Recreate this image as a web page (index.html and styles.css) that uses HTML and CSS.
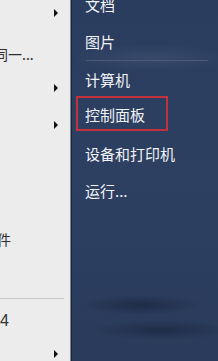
FILE: index.html
```html
<!DOCTYPE html>
<html>
<head>
<meta charset="utf-8">
<link rel="stylesheet" href="styles.css">
</head>
<body>
<div class="menu">
  <div class="left">
    <div class="lrow r1"><span class="arrow"></span></div>
    <div class="lrow r2"><span class="ltext cut6">同一...</span></div>
    <div class="lrow r3"><span class="arrow"></span></div>
    <div class="lrow r4"><span class="arrow"></span></div>
    <div class="lrow r5"><span class="ltext cut3">件</span></div>
    <div class="lsep"></div>
    <div class="lrow r6"><span class="ltext num">4</span></div>
    <div class="lrow r7"><span class="arrow"></span></div>
  </div>
  <div class="right">
    <div class="ritem first">文档</div>
    <div class="ritem">图片</div>
    <div class="rsep"></div>
    <div class="ritem">计算机</div>
    <div class="ritem boxrow"><span class="redbox">控制面板</span></div>
    <div class="ritem">设备和打印机</div>
    <div class="ritem">运行...</div>
  </div>
</div>
</body>
</html>
```

FILE: styles.css
```css
html, body {
  margin: 0;
  padding: 0;
  width: 218px;
  height: 361px;
  overflow: hidden;
  background: #ececec;
}
.menu {
  display: flex;
  width: 218px;
  height: 361px;
  overflow: hidden;
  font-family: "Noto Sans CJK SC", "Noto Sans", sans-serif;
}
.left {
  width: 70px;
  flex: none;
  background: #ececec;
  display: flex;
  flex-direction: column;
}
.lrow {
  height: 16px;
  display: flex;
  align-items: center;
  justify-content: space-between;
  position: relative;
}
.r1 { margin-top: 6px; }
.r2 { margin-top: 25px; }
.r3 { margin-top: 19px; }
.r4 { margin-top: 22px; }
.r5 { margin-top: 99px; }
.lsep {
  margin-top: 51px;
  height: 1px;
  width: 64px;
  background: #c9c9c9;
}
.r6 { margin-top: 14px; }
.r7 { margin-top: 17px; }
.arrow {
  margin-left: auto;
  margin-right: 12px;
  width: 0;
  height: 0;
  border-top: 4px solid transparent;
  border-bottom: 4px solid transparent;
  border-left: 4px solid #111;
}
.ltext {
  font-size: 14px;
  color: #2e2e2e;
  white-space: nowrap;
  line-height: 16px;
}
.cut6 { margin-left: -6px; }
.cut3 { margin-left: -3px; }
.num {
  font-family: "Liberation Sans", sans-serif;
  font-size: 16px;
  color: #333;
  margin-left: 0;
}
.right {
  flex: 1;
  border-left: 1px solid #7d8593;
  box-shadow: inset 1px 0 0 #1a2538;
  background:
    radial-gradient(ellipse 60px 10px at 70px 305px, rgba(20,30,52,0.55), transparent),
    radial-gradient(ellipse 70px 10px at 90px 330px, rgba(20,30,52,0.5), transparent),
    radial-gradient(ellipse 80px 14px at 80px 58px, rgba(90,110,140,0.25), transparent),
    linear-gradient(180deg, #2b3d5e 0%, #2d4062 50%, #2a3b5b 100%);
  display: flex;
  flex-direction: column;
}
.ritem {
  height: 37px;
  display: flex;
  align-items: center;
  padding-left: 14px;
  font-size: 15px;
  color: #f1f3f7;
  white-space: nowrap;
}
.first { margin-top: -14px; }
.rsep {
  height: 1px;
  margin-left: 15px;
  margin-right: 10px;
  background: #4b5b78;
}
.boxrow {
  padding-left: 5px;
  align-items: flex-start;
}
.redbox {
  margin-top: -2px;
  box-sizing: border-box;
  width: 92px;
  height: 35px;
  border: 2px solid #c3313d;
  padding-left: 7px;
  padding-top: 1px;
  display: flex;
  align-items: center;
}
```
